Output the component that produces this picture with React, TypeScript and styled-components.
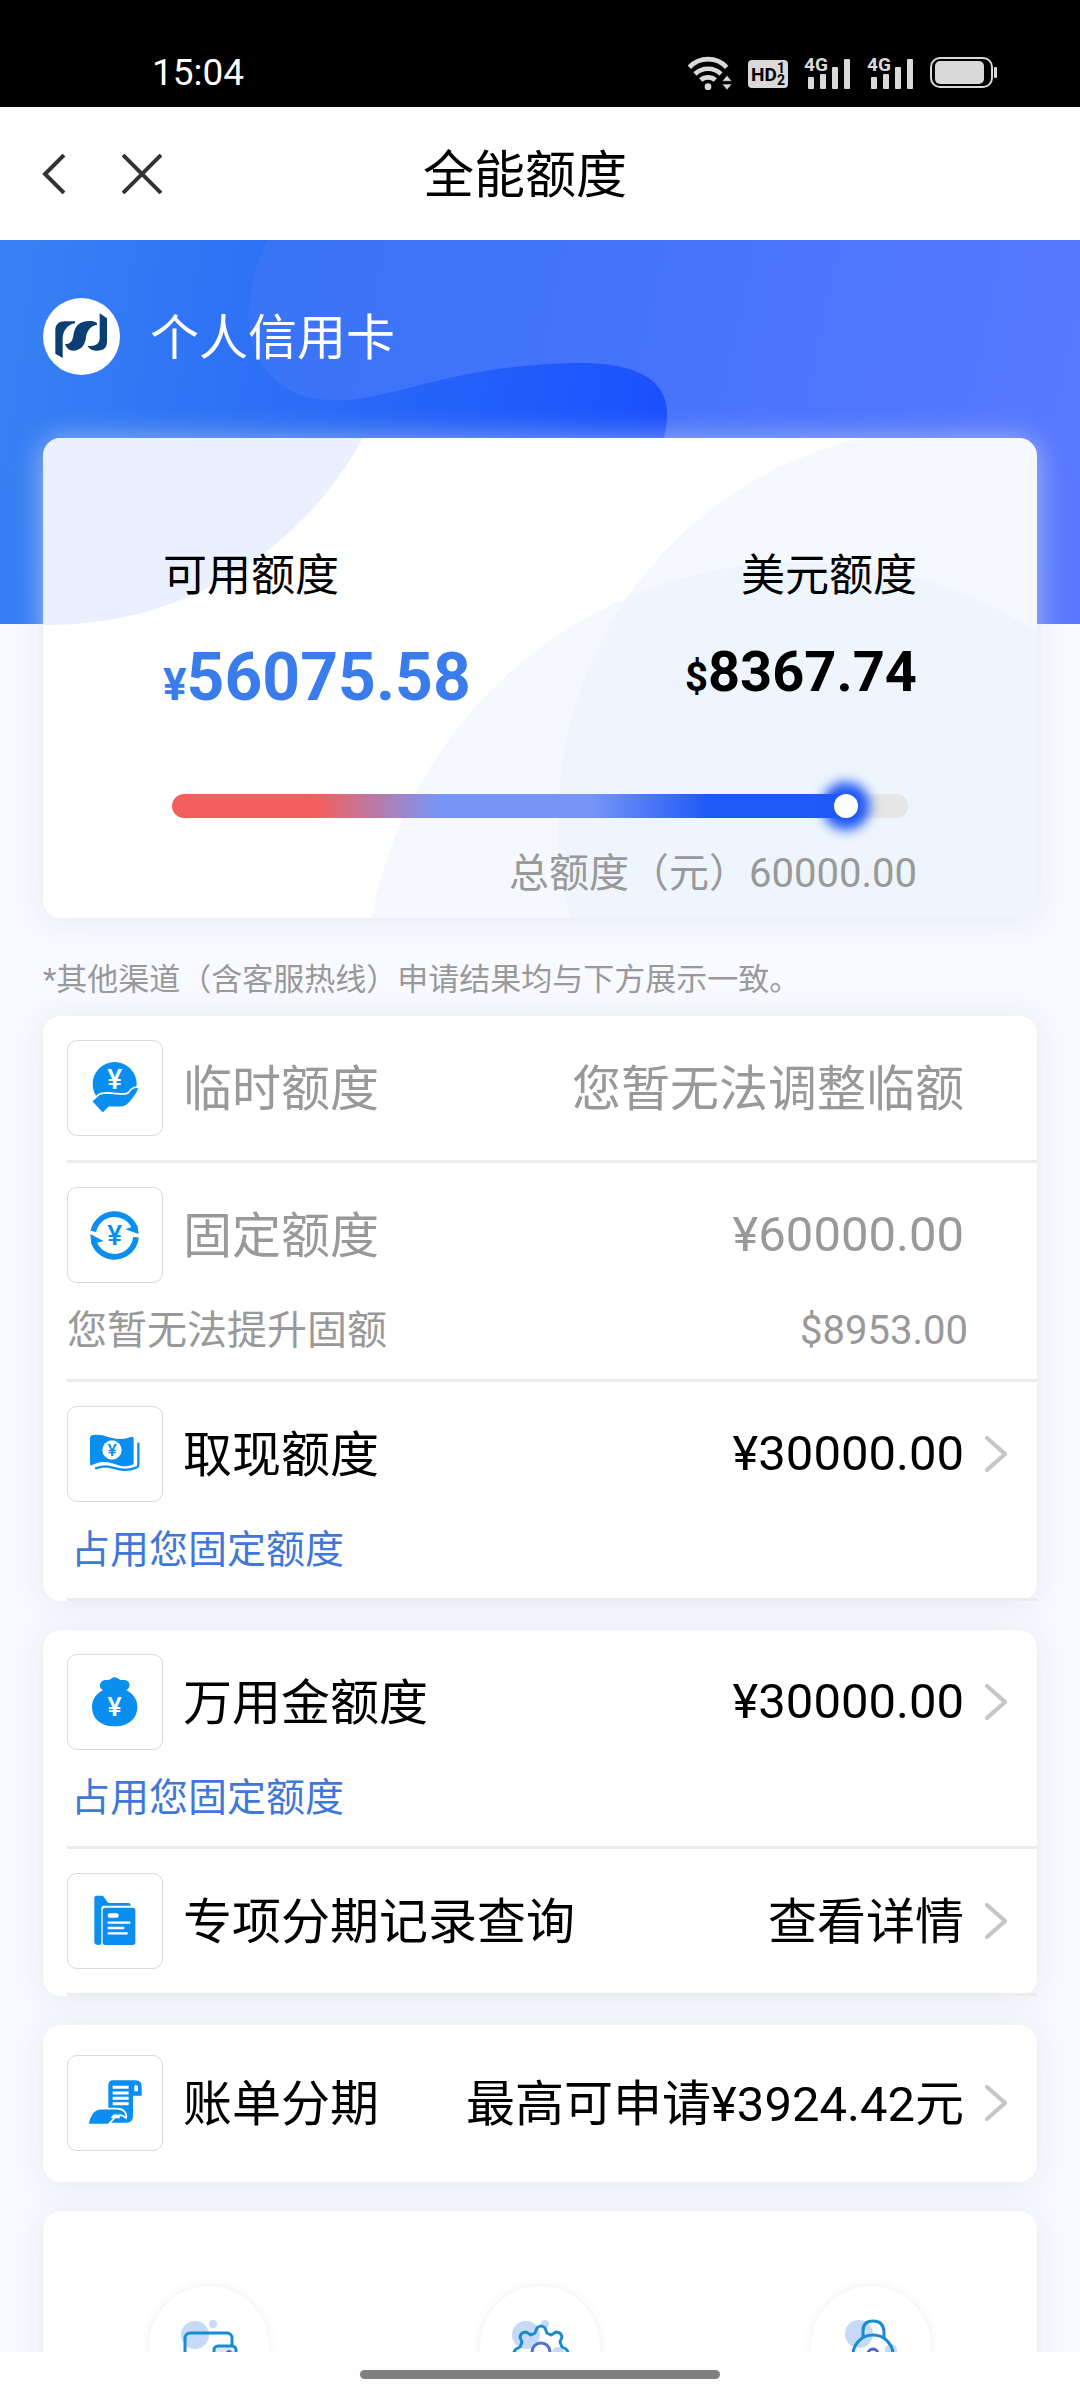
import React from "react";
import styled, { createGlobalStyle, css } from "styled-components";

const font = 'Roboto, "Noto Sans CJK SC", sans-serif';
const blue = "#0a8ef0";

const GlobalStyle = createGlobalStyle`
  * { box-sizing: border-box; }
  body { margin: 0; background: #f8faff; font-family: ${font}; color: #000; }
  button { font: inherit; color: inherit; border: 0; padding: 0; background: none; cursor: pointer; }
  a { color: inherit; text-decoration: none; }
  svg { display: block; }
`;

const Screen = styled.div`
  height: 100vh;
  display: flex;
  flex-direction: column;
  overflow: hidden;
`;

/* ---------- status bar ---------- */
const StatusBar = styled.header`
  flex: none;
  height: 107px;
  padding: 39px 83px 0 152px;
  display: flex;
  align-items: flex-start;
  justify-content: space-between;
  background: #000;
  color: #fff;
`;
const Clock = styled.time`
  font-size: 37px;
  line-height: 68px;
`;
const StatusIcons = styled.div`
  height: 68px;
  display: flex;
  align-items: center;
  gap: 16px;
`;

/* ---------- navigation bar ---------- */
const NavBar = styled.nav`
  flex: none;
  height: 133px;
  padding: 0 30px 0 28px;
  display: grid;
  grid-template-columns: 152px 1fr 180px;
  align-items: center;
  background: #fff;
`;
const NavButtons = styled.div`
  display: flex;
  gap: 36px;
`;
const NavButton = styled.button`
  width: 52px;
  height: 52px;
  display: grid;
  place-items: center;
`;
const Title = styled.h1`
  margin: 0;
  padding-top: 4px;
  text-align: center;
  font-size: 51px;
  line-height: 72px;
  font-weight: 400;
`;

/* ---------- content ---------- */
const Content = styled.main`
  flex: 1;
  min-height: 0;
  overflow: hidden;
`;
const Hero = styled.section`
  position: relative;
  height: 384px;
  padding: 56px 43px;
`;
const Backdrop = styled.svg`
  position: absolute;
  inset: 0;
  width: 100%;
  height: 100%;
`;
const Account = styled.div`
  position: relative;
  display: flex;
  align-items: center;
  gap: 30px;
  color: #fff;
  font-size: 49px;
  line-height: 77px;
`;
const shadow = css`
  box-shadow: 0 2px 30px rgba(222, 225, 234, 0.65);
`;
const Card = styled.section`
  position: relative;
  margin: -186px 43px 0;
  padding: 108px 120px 16px;
  border-radius: 18px;
  background: #fff;
  overflow: hidden;
  ${shadow}
`;
const Balances = styled.div`
  position: relative;
  display: flex;
  justify-content: space-between;
`;
const Balance = styled.div<{ $end?: boolean }>`
  display: flex;
  flex-direction: column;
  gap: 36px;
  align-items: ${(p) => (p.$end ? "flex-end" : "flex-start")};
`;
const BalanceLabel = styled.span`
  font-size: 44px;
  line-height: 60px;
`;
const Amount = styled.strong<{ $main?: boolean }>`
  font-weight: 700;
  font-size: ${(p) => (p.$main ? 66 : 56)}px;
  line-height: ${(p) => (p.$main ? 72 : 60)}px;
  color: ${(p) => (p.$main ? "#3b7cec" : "#000")};
`;
const Currency = styled.small<{ $size: number }>`
  font-size: ${(p) => p.$size}px;
  line-height: 1;
`;
const Usage = styled.input<{ $fill: number }>`
  appearance: none;
  position: relative;
  display: block;
  width: calc(100% - 18px);
  height: 24px;
  margin: 80px 9px 0;
  border-radius: 12px;
  background:
    linear-gradient(90deg, #f5605c 21%, #7896f8 39%, #7896f8 61%, #205af6 78%) 0 0 / ${(p) => p.$fill}% 100% no-repeat,
    #e6e6e6;
  &::-webkit-slider-thumb {
    appearance: none;
    width: 24px;
    height: 24px;
    border-radius: 50%;
    background: #fff;
    box-shadow: 0 0 12px 12px #1f58f5;
  }
`;
const Total = styled.p`
  position: relative;
  margin: 28px 0 0;
  text-align: right;
  font-size: 40px;
  line-height: 56px;
  color: #999;
`;
const Note = styled.p`
  margin: 42px 43px 16px;
  font-size: 31px;
  line-height: 40px;
  color: #999;
`;

/* ---------- lists ---------- */
const Panels = styled.div`
  display: flex;
  flex-direction: column;
  gap: 29px;
  padding: 0 43px 29px;
`;
const Panel = styled.section<{ $roomy?: boolean }>`
  padding: ${(p) => (p.$roomy ? "6px 0 7px 24px" : "0 0 0 24px")};
  border-radius: 18px;
  background: #fff;
  ${shadow}
`;
const Row = styled.div<{ $muted?: boolean; $plain?: boolean }>`
  border-bottom: ${(p) => (p.$plain ? 0 : 3)}px solid #ececec;
  color: ${(p) => (p.$muted ? "#999" : "#000")};
`;
const RowMain = styled.div`
  display: flex;
  align-items: center;
  padding: 24px 30px 24px 0;
  font-size: 49px;
  line-height: 72px;
`;
const IconBox = styled.span`
  flex: none;
  width: 96px;
  height: 96px;
  margin-right: 20px;
  border: 1px solid #d9d9d9;
  border-radius: 10px;
`;
const RowLabel = styled.span`
  padding-top: 4px;
`;
const Value = styled.span<{ $amount: boolean }>`
  margin-left: auto;
  padding-top: ${(p) => (p.$amount ? 0 : 4)}px;
`;
const Arrow = styled.span`
  width: 22px;
  margin-left: 21px;
`;
const Sub = styled.div`
  display: flex;
  justify-content: space-between;
  padding: 0 69px 24px 0;
  font-size: 40px;
  line-height: 48px;
`;
const SubLink = styled.a`
  padding-left: 4px;
  font-size: 39px;
  color: #3f78d8;
`;
const Shortcuts = styled.section`
  display: grid;
  grid-template-columns: repeat(3, 1fr);
  justify-items: center;
  padding: 75px 0 90px;
  border-radius: 18px;
  background: #fff;
  ${shadow}
`;
const Shortcut = styled.button`
  width: 120px;
  height: 120px;
  border-radius: 50%;
  background: #fff;
  box-shadow: 0 0 8px rgba(70, 80, 130, 0.1);
`;
const HomeBar = styled.footer`
  flex: none;
  position: relative;
  height: 48px;
  padding-top: 18px;
  background: #fefefe;
`;
const HomeIndicator = styled.div`
  width: 33.333%;
  height: 9px;
  margin: 0 auto;
  border-radius: 5px;
  background: #808080;
`;

/* ---------- drawings ---------- */
const Wifi = () => (
  <svg width="44" height="34" viewBox="0 0 132 102" aria-hidden="true">
    <g fill="none" stroke="#d9d9d9" strokeWidth="14">
      <path d="M4 34A76 76 0 0 1 116 34" />
      <path d="M21 54A56 56 0 0 1 99 54" />
      <path d="M38 72A34 34 0 0 1 82 72" />
    </g>
    <circle cx="60" cy="92" r="10" fill="#d9d9d9" />
    <path d="M117 58l15 18h-30zM117 102l15-18h-30z" fill="#d9d9d9" stroke="#000" strokeWidth="2" />
  </svg>
);
const Hd = () => (
  <svg width="40" height="50" viewBox="0 -8 40 50" aria-hidden="true">
    <rect y="4" width="40" height="28" rx="4" fill="#d9d9d9" />
    <g fontFamily="Roboto" fontWeight="700">
      <text x="3" y="25" fontSize="19">HD</text>
      <text x="29" y="17" fontSize="14">1</text>
      <text x="29" y="29" fontSize="14">2</text>
    </g>
  </svg>
);
const Signal = () => (
  <svg width="47" height="50" viewBox="0 -8 47 50" aria-hidden="true">
    <g fill="#d9d9d9">
      <rect x="4" y="21" width="6" height="12" rx="1" />
      <rect x="16" y="18" width="6" height="15" rx="1" />
      <rect x="28" y="11" width="6" height="22" rx="1" />
      <rect x="40" y="3" width="6" height="30" rx="1" />
      <text x="0" y="15" fontSize="19" fontFamily="Roboto" fontWeight="700">4G</text>
    </g>
  </svg>
);
const Battery = () => (
  <svg width="67" height="34" viewBox="0 0 67 34" aria-hidden="true">
    <rect x="1" y="2" width="61" height="29" rx="9" fill="none" stroke="#d9d9d9" strokeWidth="2" />
    <rect x="5" y="5" width="49" height="23" rx="5" fill="#d9d9d9" />
    <rect x="64" y="11" width="3" height="11" rx="1" fill="#d9d9d9" />
  </svg>
);
const BankLogo = () => (
  <svg width="77" height="77" viewBox="0 0 231 231" aria-hidden="true">
    <circle cx="115.500" cy="115.500" r="115.500" fill="#fff" />
    <g fill="#0b3f73">
      <path d="M37 98C37 80 47 70 66 70H96V76C77 79 61 95 59 119V180L37 167Z" />
      <path d="M66 138C78 140 88 132 91 114C94 84 110 69 139 69C149 69 156 71 162 75V80C146 82 132 95 129 118C126 146 110 158 91 158C79 158 71 151 66 138Z" />
      <path d="M170 46L192 61V130C192 150 182 158 162 158C148 158 139 153 133 143C154 147 170 139 170 121Z" />
    </g>
  </svg>
);
const Chevron = () => (
  <svg width="22" height="36" viewBox="0 0 22 36" fill="none" stroke="#c6c6c6" strokeWidth="4" strokeLinecap="round" aria-hidden="true">
    <path d="M2 2L20 18L2 34" />
  </svg>
);

const Glyph = ({ children }: { children: React.ReactNode }) => (
  <svg width="94" height="94" viewBox="3 3 282 282" fill={blue} aria-hidden="true">{children}</svg>
);
const Yuan = ({ x = 143, y, size = 84, fill = "#fff" }: { x?: number; y: number; size?: number; fill?: string }) => (
  <text x={x} y={y} fontSize={size} fontWeight="500" fontFamily="Roboto" textAnchor="middle" fill={fill}>¥</text>
);
const HandCoin = () => (
  <Glyph>
    <circle cx="143" cy="132" r="66" />
    <Yuan y={147} />
    <path d="M73 184L95 164C110 154 135 160 150 161C168 163 178 164 184 158C192 146 204 139 216 143C215 156 204 170 190 186C180 198 172 202 160 202H126L107 221Z" stroke="#fff" strokeWidth="5" />
  </Glyph>
);
const CycleCoin = () => (
  <Glyph>
    <g fill="none" stroke={blue} strokeWidth="17">
      <path d="M79 133A65 65 0 0 1 203 122" />
      <path d="M207 151A65 65 0 0 1 80 163" />
    </g>
    <path d="M175 127L211 114L215 141ZM70 141L110 163L73 170Z" />
    <path d="M68 137L90 144M216 146L190 139" stroke="#fff" strokeWidth="5" />
    <Yuan y={173} fill={blue} />
  </Glyph>
);
const Cash = () => (
  <Glyph>
    <path d="M69 97Q69 87 80 87C110 83 125 97 155 99C175 100 188 93 194 92Q200 92 200 98V172Q199 177 193 178C160 188 145 170 115 168C95 167 83 174 74 178Q69 179 69 174Z" />
    <circle cx="135" cy="132" r="29" fill="#fff" />
    <Yuan x={135} y={151} size={52} fill={blue} />
    <path d="M214 113V178Q214 183 208 185C165 201 145 182 115 181C100 181 94 184 87 187" fill="none" stroke={blue} strokeWidth="7" strokeLinecap="round" />
  </Glyph>
);
const MoneyBag = () => (
  <Glyph>
    <path d="M108 109C92 99 98 76 119 78C128 79 130 76 134 73Q143 67 152 73C157 77 160 79 168 78C190 76 194 99 178 109C197 117 211 136 211 158C211 194 184 217 143 217S75 194 75 158C75 136 89 117 108 109Z" />
    <Yuan y={185} size={80} />
  </Glyph>
);
const Folder = () => (
  <Glyph>
    <path d="M82 75Q82 68 89 68H108L122 88Q123 90 127 90H185Q191 90 191 98H111Q103 98 103 106V209Q103 216 96 216Q82 216 82 207Z" />
    <rect x="107" y="104" width="98" height="112" rx="8" />
    <rect x="122" y="121" width="33" height="13" rx="6" fill="#fff" />
    <path d="M125 149H187M125 165H169M125 181H179" stroke="#fff" strokeWidth="7" strokeLinecap="round" />
  </Glyph>
);
const BillScroll = () => (
  <Glyph>
    <path d="M124 90Q124 76 138 76H205Q224 76 224 95V122H198V183Q198 203 178 203H132L124 165Z" />
    <path d="M137 97H185M137 114H185M137 130H185M137 146H185" stroke="#fff" strokeWidth="9" />
    <path d="M202 109V94Q207 86 213 94V109Z" fill="#fff" />
    <path d="M63 208C66 184 78 163 99 161H150C170 161 181 174 177 189Q165 177 151 182Q145 188 141 190L124 209Z" stroke="#fff" strokeWidth="5" />
    <path d="M131 189Q140 171 154 181Q161 184 158 190Z" fill="#fff" />
  </Glyph>
);

const line = { fill: "none", stroke: "#188bd2", strokeWidth: 3 };
const ShortcutGlyph = ({ children }: { children: React.ReactNode }) => (
  <svg width="120" height="120" viewBox="2 2 120 120" aria-hidden="true">{children}</svg>
);
const WalletIcon = () => (
  <ShortcutGlyph>
    <circle cx="48" cy="51" r="14" fill="#c6d9f7" />
    <circle cx="66" cy="40" r="4" fill="#c6d9f7" />
    <g {...line}>
      <rect x="38" y="49" width="47" height="36" rx="5" />
      <rect x="67" y="62" width="22" height="15" rx="4" fill="#dde8fb" />
    </g>
    <circle cx="82" cy="69" r="3" fill="#4b68c8" />
  </ShortcutGlyph>
);
const GearIcon = () => (
  <ShortcutGlyph>
    <circle cx="48" cy="51" r="14" fill="#c6d9f7" />
    <circle cx="67" cy="40" r="4" fill="#c6d9f7" />
    <circle cx="80" cy="69" r="6" fill="#c6d9f7" />
    <path {...line} strokeLinejoin="round" d="M59 44Q63 40 67 44L69 49L73 51L78 48Q83 48 84 53L82 58L84 63L88 65Q92 69 88 73L84 75L82 79L84 84Q83 89 78 89L73 87L69 89L67 93Q63 97 59 93L57 89L53 87L48 89Q43 89 42 84L44 79L42 75L38 73Q34 69 38 65L42 63L44 58L42 53Q43 48 48 48L53 51L57 49Z" />
    <circle cx="63" cy="68" r="9" fill="#fff" stroke="#4b75cf" strokeWidth="3" />
  </ShortcutGlyph>
);
const LockIcon = () => (
  <ShortcutGlyph>
    <circle cx="50" cy="50" r="14" fill="#c6d9f7" />
    <circle cx="82" cy="66" r="6" fill="#c6d9f7" />
    <path {...line} d="M54 54V47Q54 37 64 37T75 47V54" />
    <circle {...line} cx="64" cy="71" r="20" />
    <path d="M64 75V82M59 70a5 5 0 1 1 10 0a5 5 0 1 1 -10 0" fill="none" stroke="#4b68c8" strokeWidth="3" />
  </ShortcutGlyph>
);

type ItemProps = {
  icon: React.ReactNode;
  label: string;
  value: string;
  muted?: boolean;
  href?: string;
  plain?: boolean;
  children?: React.ReactNode;
};
const Item = ({ icon, label, value, muted, href, plain, children }: ItemProps) => (
  <Row $muted={muted} $plain={plain}>
    <RowMain as={href ? "a" : "div"} href={href}>
      <IconBox>{icon}</IconBox>
      <RowLabel>{label}</RowLabel>
      <Value $amount={value.startsWith("¥")}>{value}</Value>
      <Arrow>{href && <Chevron />}</Arrow>
    </RowMain>
    {children && <Sub>{children}</Sub>}
  </Row>
);

const usedPercent = 93;

export default function App() {
  return (
    <Screen>
      <GlobalStyle />
      <StatusBar>
        <Clock>15:04</Clock>
        <StatusIcons>
          <Wifi />
          <Hd />
          <Signal />
          <Signal />
          <Battery />
        </StatusIcons>
      </StatusBar>
      <NavBar>
        <NavButtons>
          <NavButton aria-label="返回">
            <svg width="24" height="40" viewBox="0 0 24 40" fill="none" stroke="#333" strokeWidth="4">
              <path d="M22 1L3 20L22 39" />
            </svg>
          </NavButton>
          <NavButton aria-label="关闭">
            <svg width="40" height="40" viewBox="0 0 40 40" fill="none" stroke="#333" strokeWidth="4">
              <path d="M1 1L39 39M39 1L1 39" />
            </svg>
          </NavButton>
        </NavButtons>
        <Title>全能额度</Title>
      </NavBar>
      <Content>
        <Hero>
          <Backdrop viewBox="0 0 1080 384" preserveAspectRatio="none" aria-hidden="true">
            <defs>
              <linearGradient id="deep" gradientUnits="userSpaceOnUse" x1="0" y1="100" x2="670" y2="200">
                <stop offset="0" stopColor="#3781f4" />
                <stop offset="0.45" stopColor="#2b6df6" />
                <stop offset="1" stopColor="#1a50fe" />
              </linearGradient>
              <linearGradient id="light" gradientUnits="userSpaceOnUse" x1="240" y1="60" x2="1080" y2="240">
                <stop offset="0" stopColor="#3874f6" />
                <stop offset="0.4" stopColor="#4373fb" />
                <stop offset="1" stopColor="#5879ff" />
              </linearGradient>
            </defs>
            <rect width="1080" height="384" fill="url(#deep)" />
            <path d="M267 0C247 45 240 90 262 125C280 152 310 162 344 160C400 157 460 123 585 123C645 124 668 145 667 175C667 190 664 200 648 250L620 384H1080V0Z" fill="url(#light)" />
          </Backdrop>
          <Account>
            <BankLogo />
            <RowLabel>个人信用卡</RowLabel>
          </Account>
        </Hero>
        <Card>
          <Backdrop viewBox="0 0 994 480" preserveAspectRatio="xMidYMid slice" aria-hidden="true">
            <circle cx="7" cy="-168" r="355" fill="#eaf0fe" />
            <g fill="#e2ecfc" fillOpacity="0.34">
              <circle cx="907" cy="382" r="392" />
              <circle cx="757" cy="560" r="436" />
            </g>
          </Backdrop>
          <Balances>
            <Balance>
              <BalanceLabel>可用额度</BalanceLabel>
              <Amount $main><Currency $size={44}>¥</Currency>56075.58</Amount>
            </Balance>
            <Balance $end>
              <BalanceLabel>美元额度</BalanceLabel>
              <Amount><Currency $size={40}>$</Currency>8367.74</Amount>
            </Balance>
          </Balances>
          <Usage type="range" min={0} max={100} value={usedPercent} readOnly $fill={usedPercent} aria-label="可用额度" />
          <Total>总额度（元）60000.00</Total>
        </Card>
        <Note>*其他渠道（含客服热线）申请结果均与下方展示一致。</Note>
        <Panels>
          <Panel>
            <Item icon={<HandCoin />} label="临时额度" value="您暂无法调整临额" muted />
            <Item icon={<CycleCoin />} label="固定额度" value="¥60000.00" muted>
              <span>您暂无法提升固额</span>
              <span>$8953.00</span>
            </Item>
            <Item icon={<Cash />} label="取现额度" value="¥30000.00" href="#cash">
              <SubLink href="#fixed">占用您固定额度</SubLink>
            </Item>
          </Panel>
          <Panel>
            <Item icon={<MoneyBag />} label="万用金额度" value="¥30000.00" href="#fund">
              <SubLink href="#fixed">占用您固定额度</SubLink>
            </Item>
            <Item icon={<Folder />} label="专项分期记录查询" value="查看详情" href="#records" />
          </Panel>
          <Panel $roomy>
            <Item icon={<BillScroll />} label="账单分期" value="最高可申请¥3924.42元" href="#instalment" plain />
          </Panel>
          <Shortcuts>
            <Shortcut aria-label="钱包"><WalletIcon /></Shortcut>
            <Shortcut aria-label="设置"><GearIcon /></Shortcut>
            <Shortcut aria-label="安全"><LockIcon /></Shortcut>
          </Shortcuts>
        </Panels>
      </Content>
      <HomeBar>
        <HomeIndicator />
      </HomeBar>
    </Screen>
  );
}
